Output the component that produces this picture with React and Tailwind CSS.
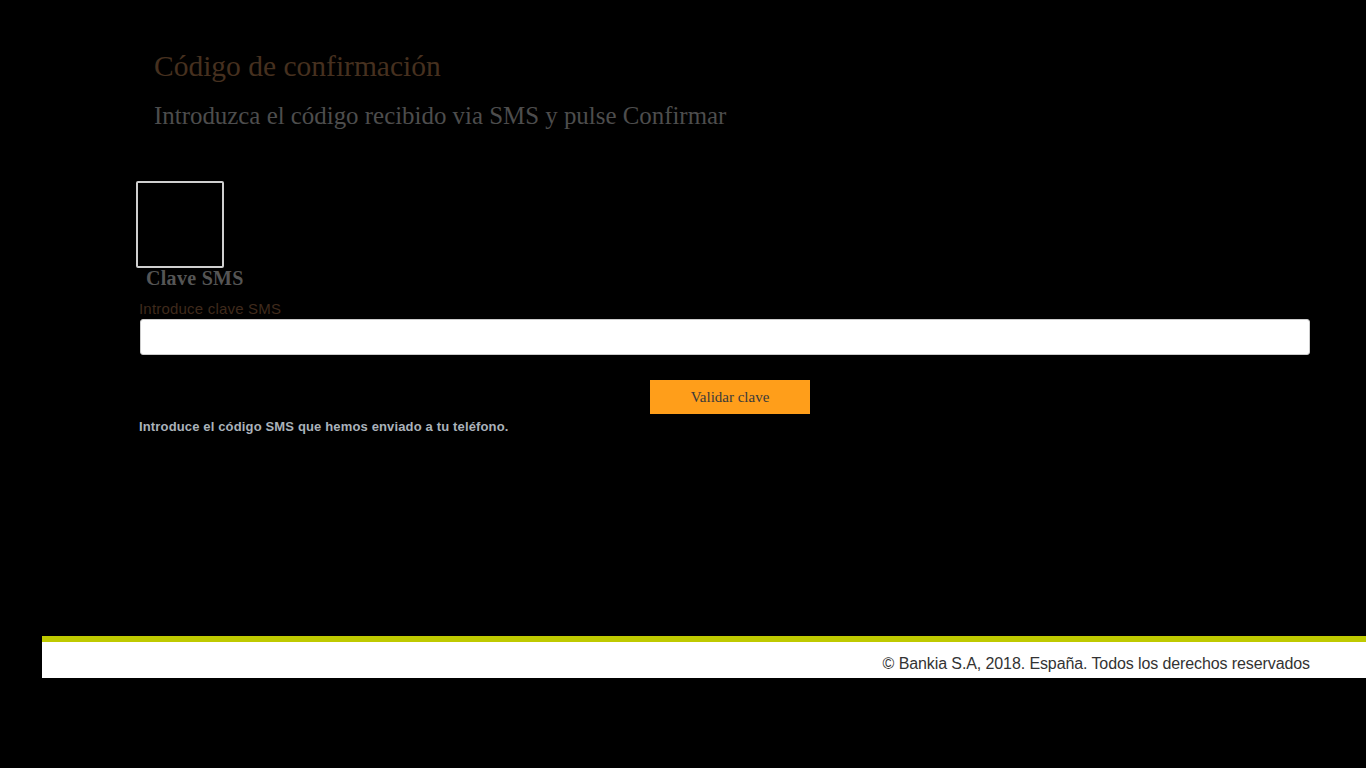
export default function App() {
  return (
    <div className="min-h-[768px] w-full bg-black font-['Liberation_Sans',Arial,sans-serif]">
      {/* Cabecera */}
      <div className="pl-[154px] pt-[50px]">
        <h1 className="font-['Liberation_Serif',serif] text-[29.5px] leading-[32px] font-normal text-[#46301f]">
          Código de confirmación
        </h1>
        <h2 className="mt-[20px] font-['Liberation_Serif',serif] text-[24.9px] leading-[28px] font-normal text-[#4d4d4d]">
          Introduzca el código recibido via SMS y pulse Confirmar
        </h2>
      </div>

      {/* Formulario */}
      <div className="mt-[51px] pl-[136px] pr-[56px]">
        <div className="h-[87px] w-[88px] rounded-[2px] border-2 border-[#cfcfcf]" />
        <div className="pl-[10px] font-['Liberation_Serif',serif] text-[20px] leading-[20px] font-bold tracking-[0.3px] text-[#555555]">
          Clave SMS
        </div>
        <div className="mt-[12px] pl-[3px] text-[15px] leading-[17px] tracking-[0.2px] text-[#3f2a1c]">
          Introduce clave SMS
        </div>
        <div className="mt-[2px] pl-[4px]">
          <input
            type="text"
            readOnly
            className="block h-[36px] w-[1170px] rounded-[3px] border border-[#cccccc] bg-white"
          />
        </div>
        <div className="mt-[25px] flex pl-[514px]">
          <button
            type="button"
            className="h-[34px] w-[160px] bg-[#ff9e1a] font-['Liberation_Serif',serif] text-[15px] text-[#3a3a3a]"
          >
            Validar clave
          </button>
        </div>
        <div className="mt-[5px] pl-[3px] text-[13px] leading-[15px] font-bold tracking-[0.15px] text-[#aab2ba]">
          Introduce el código SMS que hemos enviado a tu teléfono.
        </div>
      </div>

      {/* Pie */}
      <div className="ml-[42px] mt-[202px]">
        <div className="h-[6px] bg-[#bfca00]" />
        <div className="flex h-[36px] items-start justify-end bg-white pr-[56px] pt-[13px] text-[16px] leading-[18px] tracking-[-0.1px] text-[#333333]">
          © Bankia S.A, 2018. España. Todos los derechos reservados
        </div>
      </div>
    </div>
  )
}
